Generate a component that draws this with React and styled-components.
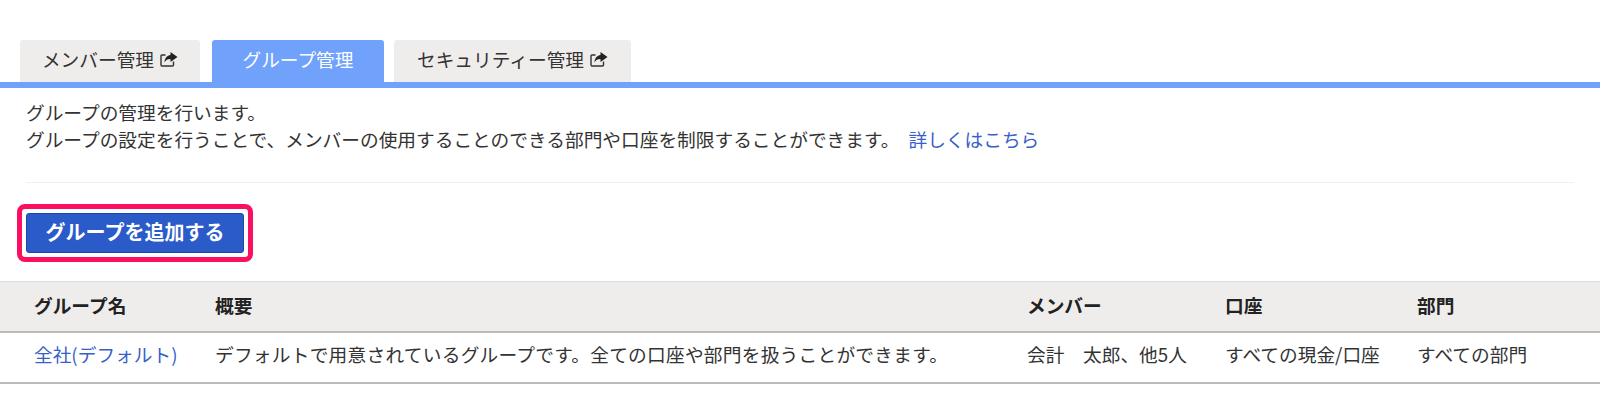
import React from "react";
import styled, { createGlobalStyle } from "styled-components";

const Global = createGlobalStyle`
  html, body { margin: 0; padding: 0; background: #fff; }
  body {
    font-family: "Noto Sans CJK JP", "Liberation Sans", sans-serif;
    color: #333;
    font-size: 18.7px;
  }
`;

const Page = styled.div`
  width: 1600px;
  height: 413px;
  overflow: hidden;
  padding-top: 40px;
  box-sizing: border-box;
`;

const TabBar = styled.div`
  display: flex;
  align-items: flex-end;
  padding-left: 20px;
  border-bottom: 6px solid #70a2fc;
`;

const Tab = styled.div`
  display: flex;
  align-items: center;
  justify-content: center;
  gap: 6px;
  width: ${(p) => p.$w}px;
  margin-right: ${(p) => p.$gap}px;
  height: 42px;
  padding-bottom: 5px;
  box-sizing: border-box;
  border-radius: 3px 3px 0 0;
  font-size: 18.7px;
  background: ${(p) => (p.$active ? "#70a2fc" : "#efedec")};
  color: ${(p) => (p.$active ? "#fff" : "#333")};
`;

const IconSvg = styled.svg`
  width: 18px;
  height: 16px;
  flex: none;
`;

const ShareIcon = () => (
  <IconSvg viewBox="0 0 18 16">
    <path d="M13.5 10.5V14a1 1 0 0 1-1 1H2a1 1 0 0 1-1-1V5a1 1 0 0 1 1-1h3.5" fill="none" stroke="#333" strokeWidth="1.4" />
    <path d="M10.5 1 17.5 6 10.5 11V8C7.5 8 5.5 9 4.5 11.5 4.5 7.5 7 4.2 10.5 4Z" fill="#222" />
  </IconSvg>
);

const Intro = styled.div`
  margin: 10px 26px 0 26px;
  padding-bottom: 30px;
  line-height: 27px;
  border-bottom: 1px solid #f0efee;
`;

const Link = styled.a`
  color: #3a5fc8;
  margin-left: 9px;
`;

const ButtonFrame = styled.div`
  display: inline-block;
  margin: 21px 0 0 17px;
  padding: 4px;
  border: 5px solid #fb0f60;
  border-radius: 8px;
  background: #fff;
`;

const AddButton = styled.button`
  display: block;
  width: 218px;
  height: 40px;
  padding: 0 0 4px;
  border: 1px solid #1c46a8;
  border-radius: 3px;
  background: #2a5bc9;
  color: #fff;
  font-family: inherit;
  font-size: 20px;
  font-weight: 700;
`;

const Table = styled.table`
  width: 100%;
  margin-top: 19px;
  border-collapse: collapse;
  table-layout: fixed;
`;

const Head = styled.th`
  height: 50px;
  padding: 0 0 4px ${(p) => p.$pad}px;
  width: ${(p) => p.$w}px;
  box-sizing: border-box;
  text-align: left;
  font-weight: 700;
  font-size: 18.7px;
  color: #222;
  background: #efedec;
  border-top: 1px solid #ddd;
  border-bottom: 2px solid #bbb;
`;

const Cell = styled.td`
  height: 51px;
  box-sizing: border-box;
  padding: 0 0 7px ${(p) => p.$pad}px;
  font-size: 18.7px;
  letter-spacing: ${(p) => p.$track || 0}px;
  white-space: nowrap;
  border-bottom: 2px solid #bbb;
`;

const GroupLink = styled.a`
  color: #3a5fc8;
`;

export default function App() {
  return (
    <Page>
      <Global />
      <TabBar>
        <Tab $w={180} $gap={12}>メンバー管理<ShareIcon /></Tab>
        <Tab $w={172} $gap={10} $active>グループ管理</Tab>
        <Tab $w={237} $gap={0}>セキュリティー管理<ShareIcon /></Tab>
      </TabBar>
      <Intro>
        グループの管理を行います。<br />
        グループの設定を行うことで、メンバーの使用することのできる部門や口座を制限することができます。
        <Link>詳しくはこちら</Link>
      </Intro>
      <ButtonFrame>
        <AddButton>グループを追加する</AddButton>
      </ButtonFrame>
      <Table>
        <thead>
          <tr>
            <Head $w={215} $pad={34}>グループ名</Head>
            <Head $w={812} $pad={0}>概要</Head>
            <Head $w={198} $pad={0}>メンバー</Head>
            <Head $w={192} $pad={0}>口座</Head>
            <Head $pad={0}>部門</Head>
          </tr>
        </thead>
        <tbody>
          <tr>
            <Cell $pad={34}><GroupLink>全社(デフォルト)</GroupLink></Cell>
            <Cell $pad={0} $track={0.25}>デフォルトで用意されているグループです。全ての口座や部門を扱うことができます。</Cell>
            <Cell $pad={0}>会計　太郎、他5人</Cell>
            <Cell $pad={0}>すべての現金/口座</Cell>
            <Cell $pad={0}>すべての部門</Cell>
          </tr>
        </tbody>
      </Table>
    </Page>
  );
}
